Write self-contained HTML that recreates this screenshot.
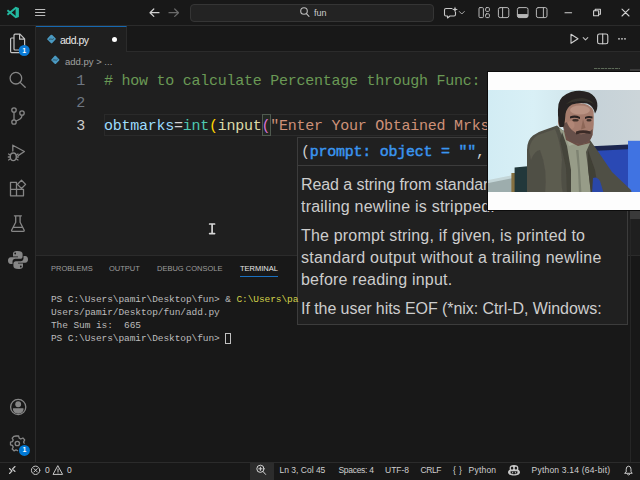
<!DOCTYPE html>
<html><head><meta charset="utf-8">
<style>
*{box-sizing:border-box;margin:0;padding:0}
html,body{width:640px;height:480px;overflow:hidden;background:#1f1f1f}
body{position:relative;font-family:"Liberation Sans",sans-serif;color:#ccc}
.abs{position:absolute}
#title{left:0;top:0;width:640px;height:26px;background:#181818;border-bottom:1px solid #2b2b2b}
#act{left:0;top:26px;width:36px;height:436px;background:#181818;border-right:1px solid #2b2b2b}
#tabs{left:36px;top:26px;width:604px;height:26px;background:#181818;border-bottom:1px solid #2b2b2b}
#tab{left:36px;top:26px;width:91px;height:26px;background:#1f1f1f;border-top:1px solid #1668b0;border-right:1px solid #2b2b2b}
#editor{left:36px;top:52px;width:604px;height:203px;background:#1f1f1f}
#panel{left:36px;top:255px;width:604px;height:207px;background:#181818;border-top:1px solid #2b2b2b}
#status{left:0;top:462px;width:640px;height:18px;background:#181818;border-top:1px solid #2b2b2b}
.ui{font-size:9px;color:#ccc;white-space:pre}
.code{font-family:"Liberation Mono",monospace;font-size:15px;letter-spacing:-0.25px;white-space:pre;line-height:22px}
.term{font-family:"Liberation Mono",monospace;font-size:9.5px;white-space:pre;line-height:13px;color:#bcbcbc;letter-spacing:-0.08px}
.tip{font-size:16px;color:#cdcdcd;white-space:pre;line-height:21.5px;letter-spacing:0.22px}
.st{top:465px;font-size:8.5px;color:#cfcfcf}
</style></head><body>
<div class="abs" id="title"></div>
<div class="abs" id="act"></div>
<div class="abs" id="tabs"></div>
<div class="abs" id="tab"></div>
<div class="abs" id="editor"></div>
<div class="abs" id="panel"></div>
<div class="abs" id="status"></div>


<!-- activity bar icons -->
<svg class="abs" style="left:0;top:26px" width="36" height="437" viewBox="0 26 36 437" fill="none" stroke="#868686" stroke-width="1.3" stroke-linejoin="round" stroke-linecap="round">
<!-- explorer -->
<g stroke="#c4c4c4" stroke-width="1.2">
<path d="M15,34.2 H20 L24.6,38.8 V49 Q24.6,50 23.6,50 H15 Q14,50 14,49 V35.2 Q14,34.2 15,34.2 Z M19.6,34.4 V39.2 H24.4"/>
<path d="M13.6,38 H11.6 Q10.6,38 10.6,39 V51.6 Q10.6,52.6 11.6,52.6 H19.6 Q20.6,52.6 20.6,51.6 V50.4"/>
</g>
<circle cx="24.2" cy="50.5" r="5.5" fill="#0a7ad6" stroke="none"/>
<!-- search -->
<circle cx="15.9" cy="78.2" r="5.8"/>
<path d="M20.1,82.4 L25.2,87.2"/>
<!-- scm -->
<circle cx="14" cy="110" r="2.2"/><circle cx="22" cy="113" r="2.2"/><circle cx="14" cy="122" r="2.2"/>
<path d="M14,112.3 V119.7 M22,115.3 Q22,119 16.2,121"/>
<!-- debug -->
<path d="M12.8,145.2 L24.4,151.5 L18.2,155.6 M12.8,145.2 V151"/>
<ellipse cx="13.3" cy="156.8" rx="3" ry="3.8"/>
<path d="M8.6,154 L10.4,155.2 M8.6,160 L10.4,158.8 M18,154 L16.2,155.2 M18,160 L16.2,158.8 M8.3,157 H10.2 M16.4,157 H18.3"/>
<!-- extensions -->
<g transform="translate(0,7.8)">
<path d="M10.5,174.5 H16.5 V188 H10.5 Z M10.5,181.5 H23.5 V188 H16.5 M16.5,181.5"/>
<path d="M21.5,172.5 L25.6,176.6 L21.5,180.7 L17.4,176.6 Z"/>
</g>
<!-- flask -->
<g transform="translate(0.4,0.8)">
<path d="M14,215 H21 M15.3,215 V221.5 L11.2,229.5 Q11,230.5 12,230.5 H23 Q24,230.5 23.8,229.5 L19.7,221.5 V215 M13,226.5 H22"/>
</g>
<!-- python -->
<g stroke="none" fill="#868686">
<path d="M17.5,251 C14,251 13,252.3 13,254 V256.5 H18 V257.3 H10.8 C9,257.3 8,258.8 8,260.6 C8,262.6 9,264 10.8,264 H12.5 V261.5 C12.5,260 13.8,258.8 15.3,258.8 H20.2 C21.6,258.8 22.6,257.8 22.6,256.4 V254 C22.6,252.3 21,251 17.5,251 Z M15.2,252.6 A0.9,0.9 0 1 1 15.2,254.4 A0.9,0.9 0 1 1 15.2,252.6 Z"/>
<path d="M18.5,269 C22,269 23,267.7 23,266 V263.5 H18 V262.7 H25.2 C27,262.7 28,261.2 28,259.4 C28,257.4 27,256 25.2,256 H23.5 V258.5 C23.5,260 22.2,261.2 20.7,261.2 H15.8 C14.4,261.2 13.4,262.2 13.4,263.6 V266 C13.4,267.7 15,269 18.5,269 Z M20.8,267.4 A0.9,0.9 0 1 1 20.8,265.6 A0.9,0.9 0 1 1 20.8,267.4 Z"/>
</g>
<!-- account -->
<circle cx="18.2" cy="407" r="7.6"/>
<circle cx="18.2" cy="404.3" r="2.3" fill="#868686"/>
<path d="M13.5,409 H23 Q22.5,413 18.2,413 Q14,413 13.5,409 Z" fill="#868686"/>
<!-- gear -->
<circle cx="17.3" cy="443.5" r="2.2"/>
<path d="M16,436 H18.6 L19.2,438.2 L20.8,439 L22.9,438 L24.7,439.9 L23.6,442 L24.2,443.2 M10.5,442.2 L12.4,441.6 L13.2,440.1 L12.2,438.1 L14,436.3 L16,436 M10.5,442.2 V444.8 L12.4,445.4 L13.2,447 L12.2,449 L14,450.8 L16,449.8 L17.5,450.6"/>
<circle cx="24.4" cy="450.4" r="5.5" fill="#0078d4" stroke="none"/>
</svg>
<div class="abs ui" style="left:22.2px;top:46.5px;font-size:7px;color:#fff;font-weight:bold">1</div>
<div class="abs ui" style="left:22.4px;top:446.4px;font-size:7px;color:#fff;font-weight:bold">1</div>

<!-- title -->
<div class="abs" style="left:190px;top:4px;width:244px;height:18px;border:1px solid #353535;border-radius:4px;background:#232323"></div>

<svg class="abs" style="left:0;top:0" width="640" height="52" viewBox="0 0 640 52" fill="none" stroke="#c8c8c8" stroke-width="1.1" stroke-linejoin="round" stroke-linecap="round">
<!-- vscode logo -->
<g stroke="#23b9a0" stroke-width="1.9" stroke-linecap="butt">
<path d="M7.4,10.2 L16.2,17.4 M7.4,14.8 L16.2,7.6"/>
</g>
<path d="M15.6,6.7 L18.9,8.1 V16.9 L15.6,18.3 Z" fill="#23b9a0" stroke="none"/>
<!-- hamburger -->
<path d="M35.5,9.5 H44.8 M35.5,12.5 H44.8 M35.5,15.5 H44.8" stroke="#bcbcbc" stroke-width="1.15"/>
<!-- arrows -->
<path d="M150,12.7 H159 M153.8,9 L150,12.7 L153.8,16.4" stroke="#d0d0d0" stroke-width="1.2"/>
<path d="M169,12.7 H178.5 M174.7,9 L178.5,12.7 L174.7,16.4" stroke="#6a6a6a" stroke-width="1.2"/>
<!-- search icon -->
<circle cx="304" cy="11" r="3.3" stroke="#bdbdbd"/><path d="M306.4,13.6 L309,16.3" stroke="#bdbdbd"/>
<!-- copilot chat -->
<path d="M446,8.5 H452 M455.5,12 V14.5 Q455.5,16 454,16 H450 L447.5,18 V16 H446 Q444.5,16 444.5,14.5 V10 Q444.5,8.5 446,8.5"/>
<path d="M455,6.5 L455.8,8.7 L458,9.5 L455.8,10.3 L455,12.5 L454.2,10.3 L452,9.5 L454.2,8.7 Z" fill="#c8c8c8" stroke="none"/>
<path d="M459.3,11.5 L461.8,14 L464.3,11.5" stroke="#a8a8a8" stroke-width="1"/>
<!-- layout icons -->
<g stroke="#b8b8b8" stroke-width="1">
<rect x="479" y="7.6" width="4.4" height="10" rx="1"/><rect x="485.6" y="7.6" width="3.8" height="3.8" rx="1"/><rect x="485.6" y="13.8" width="3.8" height="3.8" rx="1"/>
<rect x="498.4" y="7.6" width="10.4" height="10" rx="1.8"/><path d="M502.6,7.6 V17.6"/>
<rect x="517.4" y="7.6" width="10.6" height="10" rx="1.8"/><path d="M517.8,14.6 H527.6 V16 Q527.6,17.3 526,17.3 H519.4 Q517.8,17.3 517.8,16 Z" fill="#b8b8b8"/>
<rect x="536.4" y="7.6" width="10.6" height="10" rx="1.8"/><path d="M543.4,7.6 V17.6"/>
</g>
<!-- window controls -->
<path d="M565,12.8 H571.6" stroke="#d0d0d0"/>
<path d="M593.6,10.8 H598.6 V15.8 H593.6 Z M595.2,10.6 V9.2 H600.4 V14.2 H598.8" stroke="#d0d0d0"/>
<path d="M622,9.2 L629,16 M629,9.2 L622,16" stroke="#d0d0d0"/>
<!-- editor actions -->
<path d="M571,34.3 L578,38.8 L571,43.3 Z" stroke="#d0d0d0"/>
<path d="M583.2,37.6 L585.5,39.9 L587.8,37.6" stroke="#c0c0c0"/>
<rect x="597.6" y="34" width="10.2" height="9.8" rx="1.8" stroke="#d0d0d0"/><path d="M602.7,34 V43.8" stroke="#d0d0d0"/>
<g fill="#d0d0d0" stroke="none"><circle cx="619" cy="38.8" r="0.9"/><circle cx="622" cy="38.8" r="0.9"/><circle cx="625" cy="38.8" r="0.9"/></g>
</svg>

<div class="abs ui" style="left:314px;top:8px;font-size:9px">fun</div>

<!-- tab -->
<svg class="abs" style="left:45.8px;top:33.8px" width="10.6" height="10.6" viewBox="0 0 10 10"><g id="pyi"><path d="M5,0.6 Q5.5,0.6 5.9,1 L9,4.1 Q9.5,4.7 9,5.3 L5.9,8.6 Q5.3,9.2 4.6,8.6 L1.4,5.5 Q0.8,4.9 1.4,4.3 L4.4,1 Q4.7,0.6 5,0.6 Z" fill="#4a9ac2"/><path d="M2.6,5.6 Q3.4,4.2 5,4.9 Q6.6,5.6 7.5,4.1" fill="none" stroke="#1f1f1f" stroke-width="0.7" opacity="0.75"/></g></svg>
<svg class="abs" style="left:50.3px;top:55px" width="10.2" height="10.2" viewBox="0 0 10 10"><use href="#pyi"/></svg>
<div class="abs ui" style="left:60px;top:34px;font-size:10.5px;letter-spacing:-0.5px;color:#e8e8e8">add.py</div>
<div class="abs" style="left:111.8px;top:36.5px;width:5.6px;height:5.6px;border-radius:3px;background:#fff"></div>
<div class="abs ui" style="left:65px;top:56px;font-size:9.5px;color:#a0a0a0">add.py &gt; ...</div>

<!-- code -->
<div class="abs" style="left:104px;top:114px;width:536px;height:22px;border:1px solid #2a2a2a;border-right:0"></div>
<div class="abs" style="left:262px;top:114px;width:9px;height:22px;border:1px solid #4f5a4f;background:#232823"></div>
<div class="abs code" style="left:76.3px;top:71px;color:#6e7681">1</div>
<div class="abs code" style="left:76.3px;top:93px;color:#6e7681">2</div>
<div class="abs code" style="left:76.3px;top:116px;color:#ccc">3</div>
<div class="abs code" style="left:104px;top:71px;color:#6a9955"># how to calculate Percentage through Func:</div>
<div class="abs code" style="left:104px;top:116px"><span style="color:#9cdcfe">obtmarks</span><span style="color:#d4d4d4">=</span><span style="color:#4ec9b0">int</span><span style="color:#ffd700">(</span><span style="color:#dcdcaa">input</span><span style="color:#da70d6">(</span><span style="color:#ce9178">"Enter Your Obtained Mrks</span></div>

<!-- tooltip -->
<div class="abs" id="tipbox" style="left:297px;top:137px;width:331px;height:188px;background:#202020;border:1px solid #3c3c3c"></div>
<div class="abs code" style="left:301px;top:142px;color:#ccc">(<span style="color:#3a96f0;-webkit-text-stroke:0.45px #3a96f0">prompt: object = ""</span>,</div>
<div class="abs" style="left:297px;top:165px;width:330px;height:1px;background:#3c3c3c"></div>
<div class="abs tip" style="left:301px;top:174px;letter-spacing:-0.08px">Read a string from standard input. The</div>
<div class="abs tip" style="left:301px;top:196px">trailing newline is stripped.</div>
<div class="abs tip" style="left:301px;top:225px;letter-spacing:0.18px">The prompt string, if given, is printed to</div>
<div class="abs tip" style="left:301px;top:247px;letter-spacing:0.255px">standard output without a trailing newline</div>
<div class="abs tip" style="left:301px;top:269px">before reading input.</div>
<div class="abs tip" style="left:301px;top:298px;letter-spacing:-0.06px">If the user hits EOF (*nix: Ctrl-D, Windows:</div>

<!-- panel -->
<div class="abs ui" style="left:51px;top:264px;font-size:7.5px;color:#9d9d9d">PROBLEMS</div>
<div class="abs ui" style="left:109px;top:264px;font-size:7.5px;color:#9d9d9d">OUTPUT</div>
<div class="abs ui" style="left:157px;top:264px;font-size:7.5px;color:#9d9d9d">DEBUG CONSOLE</div>
<div class="abs ui" style="left:240px;top:264px;font-size:7.5px;color:#e7e7e7">TERMINAL</div>
<div class="abs" style="left:240px;top:275.5px;width:38px;height:1px;background:#1a70c0"></div>
<div class="abs term" style="left:51px;top:293px">PS C:\Users\pamir\Desktop\fun&gt; &amp; <span style="color:#d2d24a">C:\Users\pa</span></div>
<div class="abs term" style="left:51px;top:306px">Users/pamir/Desktop/fun/add.py</div>
<div class="abs term" style="left:51px;top:319px">The Sum is:  665</div>
<div class="abs term" style="left:51px;top:332px">PS C:\Users\pamir\Desktop\fun&gt; </div>

<div class="abs" style="left:630px;top:69px;width:10px;height:150px;background:#3a3a3a"></div>
<div class="abs" style="left:594px;top:68px;width:26px;height:1.4px;background:repeating-linear-gradient(90deg,#5d6a58 0 3px,#3a4038 3px 4px,#5d6a58 4px 6px,#2a2d29 6px 7px)"></div>
<div class="abs" style="left:224.5px;top:332.5px;width:6.5px;height:11.5px;border:1px solid #c0c0c0"></div>
<svg class="abs" style="left:206px;top:220px" width="12" height="17" viewBox="206 220 12 17"><path d="M209.6,224 H214.6 M212.1,224 V233.6 M209.6,233.6 H214.6" fill="none" stroke="#1a1a1a" stroke-width="3.2" stroke-linecap="round"/><path d="M209.6,224 H214.6 M212.1,224 V233.6 M209.6,233.6 H214.6" fill="none" stroke="#d6d6d6" stroke-width="1.7" stroke-linecap="round"/></svg>
<div class="abs" style="left:630px;top:219px;width:1px;height:243px;background:#262626"></div>
<!-- webcam -->
<div class="abs" style="left:487px;top:71px;width:153px;height:140px;background:#0c0c0c"></div>
<svg class="abs" id="cam" style="left:488px;top:72px" width="152" height="138" viewBox="488 72 152 138">
<defs>
<filter id="bl" x="-5%" y="-5%" width="110%" height="110%"><feGaussianBlur stdDeviation="0.55"/></filter>
<filter id="bl2" x="-20%" y="-20%" width="140%" height="140%"><feGaussianBlur stdDeviation="1.4"/></filter>
<linearGradient id="wall" x1="0" y1="0" x2="1" y2="0"><stop offset="0" stop-color="#d2ecf4"/><stop offset="0.3" stop-color="#d9f0f6"/><stop offset="0.5" stop-color="#d3e8ee"/><stop offset="0.7" stop-color="#c6d2d8"/><stop offset="1" stop-color="#ccd5d9"/></linearGradient>
<clipPath id="pc"><rect x="488" y="90" width="152" height="102"/></clipPath>
</defs>
<rect x="488" y="72" width="152" height="138" fill="#fdfdfd"/>
<g clip-path="url(#pc)">
<rect x="488" y="90" width="152" height="102" fill="url(#wall)"/>
<g filter="url(#bl)">
<!-- blue area right -->
<polygon points="592,148 628,146 640,146 640,194 588,194" fill="#2a49b4"/>
<polygon points="592,146.3 628,144.6 628,149.2 592,151" fill="#1a2850"/>
<rect x="628" y="140.8" width="14" height="54" fill="#4173e2"/>
<!-- desk & chair -->
<polygon points="486,182.5 513,176.6 513,194 486,194" fill="#9dadad"/>
<polygon points="486,180.6 513,175 513,178 486,183.6" fill="#c4d6d8"/>
<rect x="511.4" y="173" width="4" height="21" fill="#857040"/>
<polygon points="514.6,167.5 530,166 530,194 514.6,194" fill="#24383a"/>
<!-- jacket -->
<path d="M527,194 L527,150 Q527,140 533,135.5 Q538,131.8 545,129.8 L557,125.5 L562,130 L590,140 L597,150 L612,172 L631,190 L632,194 Z" fill="#504f45"/>
<path d="M529,150 Q530,140 538,135 L555,129 Q560,140 562,160 Q560,180 563,194 L545,194 Q548,170 540,150 Q535,150 531,160 Z" fill="#5c5b50"/>
<!-- shirt -->
<path d="M559,128 L565,144 L570,168 L571,194 L591,194 L588,168 L586,152 L590,143 L575,138 Z" fill="#979c88"/>
<path d="M576,150 L578,170 L579,194 L581.5,194 L580,170 L578.5,150 Z" fill="#7e8372"/>
<path d="M565,134 L569,146 L575,144 L571,137 Z" fill="#a6ab98"/>
<!-- jacket shading -->
<path d="M588,150 L588,168 L591,194 L599,194 L595,170 Z" fill="#403f36"/>
<path d="M562,132 L567,146 L571,170 L571,194 L567,194 L566,168 L560,140 Z" fill="#45443a"/>
<path d="M593,178 Q597,176 600,181 L604,194 L592,194 Z" fill="#2a47a8"/>
<!-- neck -->
<path d="M563,126 L566,140 L578,146 L590,143 L588,135 Z" fill="#6e5046"/>
<!-- ear -->
<ellipse cx="560.8" cy="122" rx="2.8" ry="5.2" fill="#9a6d5f"/>
<!-- face -->
<path d="M563,107 Q561.5,125 566,134 Q572,144 582,144 Q590,143 592.5,135 Q594.5,124 593.5,111 Q590,103 578,103 Q567,103 563,107 Z" fill="#a57c6d"/>
<!-- forehead highlight -->
<ellipse cx="580" cy="110" rx="10" ry="4.5" fill="#ba9383"/>
<ellipse cx="571" cy="125" rx="3.5" ry="4" fill="#b08676"/>
<!-- beard shadow -->
<path d="M563.5,124 Q564,134 569,139.5 Q575,145 583,144 Q590,143 592.5,135 L592.5,129 Q587,135 579,134 Q571,132 566.5,122 Z" fill="#66504a"/>
<!-- brows/eyes -->
<path d="M570,116.5 Q575,114.5 580,117 L580,119 Q575,117 570,118.5 Z" fill="#2a2220"/>
<path d="M585,117 Q588,115.5 592.5,116.5 L592.5,118.5 Q588,117.5 585,119 Z" fill="#2a2220"/>
<ellipse cx="575.5" cy="120.3" rx="3.2" ry="1.3" fill="#40302c"/>
<ellipse cx="589" cy="120.3" rx="2.6" ry="1.3" fill="#40302c"/>
<!-- nose/mustache -->
<path d="M583,119 L585.5,128 L581,129.5 Z" fill="#8d6657"/>
<path d="M576,131.5 Q583,129 590.5,131.5 L590.5,134 Q583,132.5 576,134.5 Z" fill="#3a2c28"/>
<!-- hair -->
<path d="M559.5,126.5 Q557,115 558.5,104 Q561,95 571,92 Q580,89.5 589,92.5 Q596,96 597.2,103 Q598,109 595,113.5 Q593.5,106 587,103.5 Q579,102 572,104.5 Q566.5,107.5 565.5,114 Q565,121 564,126.5 Q561.5,127.5 559.5,126.5 Z" fill="#262420"/>
<path d="M566,104 Q572,98 582,98 Q590,99 594,104 Q588,101 580,101 Q572,101.5 566,104 Z" fill="#35322d"/>
</g>
</g>
</svg>

<!-- status -->
<div class="abs" style="left:250px;top:463px;width:24px;height:17px;background:#2c2c2c"></div>
<svg class="abs" style="left:0;top:462px" width="640" height="18" viewBox="0 462 640 18" fill="none" stroke="#c8c8c8" stroke-width="1" stroke-linecap="round" stroke-linejoin="round">
<!-- remote -->
<path d="M9.5,468.5 L12,471 L9.5,473.5 M15,466.5 L12.5,469 L15,471.5" stroke-width="1.1"/>
<!-- error -->
<circle cx="35.6" cy="470.3" r="4.2"/><path d="M33.9,468.6 L37.3,472 M37.3,468.6 L33.9,472"/>
<!-- warning -->
<path d="M58,466 L62.6,474.4 H53.4 Z"/><path d="M58,469 V471.6 M58,472.9 V473"/>
<!-- zoom -->
<circle cx="260.4" cy="468.8" r="3.6" stroke="#d4d4d4"/><path d="M263,471.5 L265.6,474.4 M258.8,468.8 H262 M260.4,467.2 V470.4" stroke="#d4d4d4"/>
<!-- copilot -->
<g stroke="none" fill="#c8c8c8">
<path d="M514,465 C511,465 509.6,466 509.6,468 C509.6,468.6 509.7,469 509.9,469.4 C508.8,470 508,471 508,472.3 C508,474.3 510.5,475.6 514,475.6 C517.5,475.6 520,474.3 520,472.3 C520,471 519.2,470 518.1,469.4 C518.3,469 518.4,468.6 518.4,468 C518.4,466 517,465 514,465 Z M511.4,467 C512.4,466.6 513.2,467 513.3,468 C513.4,469 512.6,469.7 511.7,469.6 C510.8,469.5 510.6,467.4 511.4,467 Z M516.6,467 C517.4,467.4 517.2,469.5 516.3,469.6 C515.4,469.7 514.6,469 514.7,468 C514.8,467 515.6,466.6 516.6,467 Z M510.6,471.3 H517.4 V473.3 C516.4,474 515.2,474.3 514,474.3 C512.8,474.3 511.6,474 510.6,473.3 Z" fill-rule="evenodd"/>
</g>
<rect x="512.2" y="471.8" width="0.9" height="1.6" fill="#c8c8c8" stroke="none"/><rect x="514.9" y="471.8" width="0.9" height="1.6" fill="#c8c8c8" stroke="none"/>
<!-- bell -->
<path d="M625,473.3 H632.2 L631,471.6 V469.2 Q631,466.2 628.6,466.2 Q626.2,466.2 626.2,469.2 V471.6 Z M627.6,474.6 Q628.6,475.6 629.6,474.6"/>
</svg>
<div class="abs ui st" style="left:279.5px">Ln 3, Col 45</div>
<div class="abs ui st" style="left:338.5px;letter-spacing:-0.3px">Spaces: 4</div>
<div class="abs ui st" style="left:385px">UTF-8</div>
<div class="abs ui st" style="left:420.5px;letter-spacing:-0.4px">CRLF</div>
<div class="abs ui st" style="left:453px;letter-spacing:3.2px">{}</div>
<div class="abs ui st" style="left:468.6px;letter-spacing:0.2px">Python</div>
<div class="abs ui st" style="left:531.6px;letter-spacing:0.2px">Python 3.14 (64-bit)</div>
<div class="abs ui st" style="left:45px">0</div>
<div class="abs ui st" style="left:67px">0</div>
</body></html>
